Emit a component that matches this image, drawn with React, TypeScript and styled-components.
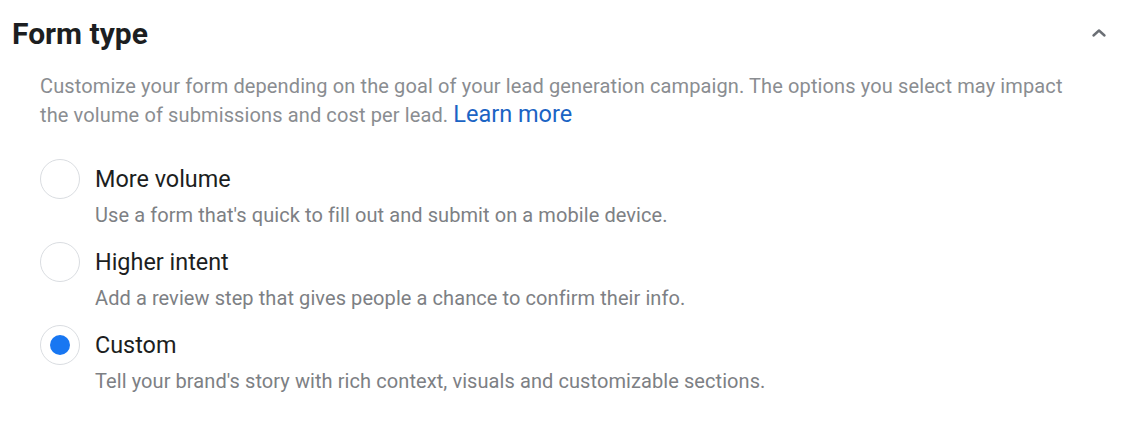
import * as React from "react";
import styled, { createGlobalStyle } from "styled-components";

const GlobalStyle = createGlobalStyle`
  body {
    margin: 0;
    background: #ffffff;
    font-family: Roboto, "Liberation Sans", Arial, sans-serif;
  }
`;

const Section = styled.section`
  padding: 15px 28px 0 12px;
`;

const Header = styled.div`
  display: flex;
  align-items: center;
  justify-content: space-between;
  height: 36px;
`;

const Title = styled.h2`
  margin: 0;
  font-size: 30px;
  font-weight: 700;
  color: #1c1e21;
`;

const Collapse = styled.button`
  border: 0;
  background: none;
  padding: 0;
  width: 20px;
  height: 20px;
  display: flex;
  align-items: center;
  justify-content: center;
  cursor: pointer;
`;

const Body = styled.div`
  padding: 21px 0 0 28px;
`;

const Description = styled.p`
  margin: 0;
  max-width: 1040px;
  font-size: 20px;
  line-height: 29px;
  letter-spacing: 0.12px;
  color: #8a8d91;
`;

const LearnMore = styled.a`
  font-size: 23.5px;
  line-height: 22px;
  letter-spacing: 0;
  color: #1b64c4;
  text-decoration: none;
`;

const Options = styled.div`
  display: flex;
  flex-direction: column;
  gap: 15px;
  margin-top: 29px;
`;

const Option = styled.label`
  display: grid;
  grid-template-columns: 40px 1fr;
  column-gap: 15px;
  row-gap: 4px;
  cursor: pointer;
`;

const Radio = styled.span<{ $checked?: boolean }>`
  width: 40px;
  height: 40px;
  box-sizing: border-box;
  border-radius: 50%;
  border: 1px solid #dadde1;
  display: flex;
  align-items: center;
  justify-content: center;
  &::after {
    content: "";
    width: 20px;
    height: 20px;
    border-radius: 50%;
    background: ${(p) => (p.$checked ? "#1877f2" : "transparent")};
  }
`;

const Label = styled.span`
  align-self: center;
  font-size: 23.4px;
  color: #1c1e21;
`;

const Hint = styled.span`
  grid-column: 2;
  font-size: 20px;
  line-height: 24px;
  letter-spacing: 0.08px;
  color: #7d8084;
`;

const options = [
  {
    label: "More volume",
    hint: "Use a form that's quick to fill out and submit on a mobile device.",
  },
  {
    label: "Higher intent",
    hint: "Add a review step that gives people a chance to confirm their info.",
  },
  {
    label: "Custom",
    hint: "Tell your brand's story with rich context, visuals and customizable sections.",
  },
];

export default function App() {
  const [selected, setSelected] = React.useState(2);
  return (
    <>
      <GlobalStyle />
      <Section>
        <Header>
          <Title>Form type</Title>
          <Collapse aria-label="Collapse">
            <svg width="16" height="10" viewBox="0 0 16 10">
              <path
                d="M2.5 7.5 L8 2.5 L13.5 7.5"
                fill="none"
                stroke="#6b6f75"
                strokeWidth="2.4"
                strokeLinecap="round"
                strokeLinejoin="round"
              />
            </svg>
          </Collapse>
        </Header>
        <Body>
          <Description>
            Customize your form depending on the goal of your lead generation
            campaign. The options you select may impact the volume of
            submissions and cost per lead. <LearnMore href="#">Learn more</LearnMore>
          </Description>
          <Options>
            {options.map((o, i) => (
              <Option key={o.label} onClick={() => setSelected(i)}>
                <Radio $checked={selected === i} />
                <Label>{o.label}</Label>
                <Hint>{o.hint}</Hint>
              </Option>
            ))}
          </Options>
        </Body>
      </Section>
    </>
  );
}
